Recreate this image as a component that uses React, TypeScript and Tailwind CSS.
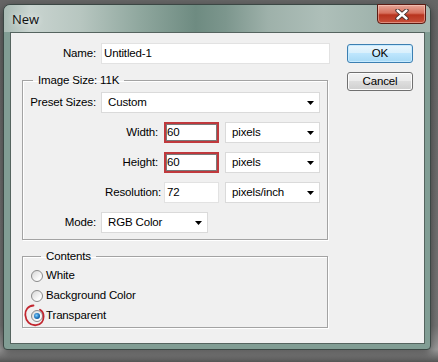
import React from "react";

const font = { fontFamily: '"Liberation Sans", Arial, sans-serif' };

function Arrow() {
  return (
    <svg width="7" height="4" viewBox="0 0 7 4" className="shrink-0">
      <path d="M0 0 H7 L3.5 4 Z" fill="#000" />
    </svg>
  );
}

function Select({ value, w }: { value: string; w: string }) {
  return (
    <div
      className={`${w} h-[21px] bg-white border border-[#dadada] flex items-center justify-between pl-[6px] pr-[5px] text-black`}
    >
      <span>{value}</span>
      <Arrow />
    </div>
  );
}

function Radio({ checked }: { checked?: boolean }) {
  return (
    <div className="w-[12px] h-[12px] rounded-full border border-[#8a8a8a] bg-[linear-gradient(135deg,#d6d6d6,#fbfbfb_70%)] flex items-center justify-center shrink-0">
      {checked && (
        <div className="w-[6px] h-[6px] rounded-full bg-[radial-gradient(circle_at_40%_40%,#7fd0ff,#1a6fb8_55%,#0b3e72)]" />
      )}
    </div>
  );
}

export default function App() {
  return (
    <div
      className="w-[438px] h-[362px] pt-[4px] pl-[3px] bg-[linear-gradient(to_bottom,#666666_0%,#747474_90%,#9a9a9a_96.5%,#555555_100%)] overflow-hidden"
      style={font}
    >
      <div className="w-[428px] h-[346px] rounded-t-[7px] rounded-b-[4px] border border-[#3b4744] bg-[#819d94] flex flex-col shadow-[0_3px_8px_rgba(0,0,0,0.45)]">
        {/* title bar */}
        <div className="h-[27px] rounded-t-[6px] flex items-start justify-between bg-[linear-gradient(to_right,#a9bbb4_0%,#c9d4d0_6%,#b7c6c0_18%,#8fa79e_32%,#6e8b81_45%,#7c968d_52%,#9eb1aa_62%,#aebfb9_75%,#9fb3ac_88%,#a6b8b1_100%)]">
          <span
            className="ml-[8px] mt-[7px] text-[13px] leading-[15px] text-[#101010] [text-shadow:0_0_6px_rgba(255,255,255,0.8)]"
            style={{ fontFamily: '"Open Sans", "Noto Sans", sans-serif' }}
          >
            New
          </span>
          <div className="mr-[4px] -mt-[1px] w-[49px] h-[20px] rounded-b-[4px] border border-[#5a1c14] bg-[linear-gradient(to_bottom,#e5a597_0%,#d7705c_45%,#b8341e_55%,#c8503a_100%)] flex items-center justify-center shadow-[inset_0_0_0_1px_rgba(255,220,210,0.45)]">
            <svg width="14" height="11" viewBox="0 0 14 11">
              <path d="M2.5 1.5 L11.5 9.5 M11.5 1.5 L2.5 9.5" stroke="#3a2a28" strokeWidth="4.2" strokeLinecap="round" />
              <path d="M2.5 1.5 L11.5 9.5 M11.5 1.5 L2.5 9.5" stroke="#ffffff" strokeWidth="2.4" strokeLinecap="round" />
            </svg>
          </div>
        </div>

        {/* client */}
        <div className="ml-[6px] mr-[5px] h-[312px] border border-[#55645f] bg-[#f0f0f0] flex pl-[11px] text-[11.5px] tracking-[-0.15px] text-black">
          <div className="w-[308px] flex flex-col">
            {/* Name row */}
            <div className="mt-[10px] flex items-center h-[21px]">
              <span className="w-[74px] text-right">Name:</span>
              <div className="ml-[5px] w-[229px] h-[21px] bg-white border border-[#e2e2e2] flex items-center pl-[2px]">
                Untitled-1
              </div>
            </div>

            {/* Image Size group */}
            <fieldset className="mt-[9px] w-[306px] border border-[#a3a3a3] shadow-[1px_1px_0_#fff,inset_1px_1px_0_#fff] pt-[5px] pb-[6px] flex flex-col gap-[9px]">
              <legend className="ml-[10px] px-[5px] leading-[14px]">Image Size: 11K</legend>
              <div className="flex items-center h-[21px]">
                <span className="w-[73px] text-right">Preset Sizes:</span>
                <div className="ml-[5px]">
                  <Select value="Custom" w="w-[219px]" />
                </div>
              </div>
              <div className="flex items-center h-[21px]">
                <span className="w-[135px] text-right">Width:</span>
                <div className="ml-[6px] w-[55px] h-[21px] bg-white border-2 border-[#c0393d] shadow-[inset_0_0_0_1px_#7a7a7a] flex items-center pl-[1px]">
                  60
                </div>
                <div className="ml-[6px]">
                  <Select value="pixels" w="w-[95px]" />
                </div>
              </div>
              <div className="flex items-center h-[21px]">
                <span className="w-[135px] text-right">Height:</span>
                <div className="ml-[6px] w-[55px] h-[21px] bg-white border-2 border-[#c0393d] shadow-[inset_0_0_0_1px_#7a7a7a] flex items-center pl-[1px]">
                  60
                </div>
                <div className="ml-[6px]">
                  <Select value="pixels" w="w-[95px]" />
                </div>
              </div>
              <div className="flex items-center h-[21px]">
                <span className="w-[138px] text-right">Resolution:</span>
                <div className="ml-[3px] w-[55px] h-[21px] bg-white border border-[#e2e2e2] flex items-center pl-[2px]">
                  72
                </div>
                <div className="ml-[6px]">
                  <Select value="pixels/inch" w="w-[95px]" />
                </div>
              </div>
              <div className="flex items-center h-[21px]">
                <span className="w-[73px] text-right">Mode:</span>
                <div className="ml-[5px]">
                  <Select value="RGB Color" w="w-[107px]" />
                </div>
              </div>
            </fieldset>

            {/* Contents group */}
            <fieldset className="mt-[9px] w-[306px] border border-[#a3a3a3] shadow-[1px_1px_0_#fff,inset_1px_1px_0_#fff] pt-[3px] pb-[1px] pl-[8px] flex flex-col">
              <legend className="ml-[10px] px-[5px] leading-[14px]">Contents</legend>
              <div className="h-[20px] flex items-center gap-[3px]">
                <Radio />
                <span>White</span>
              </div>
              <div className="h-[20px] flex items-center gap-[3px]">
                <Radio />
                <span>Background Color</span>
              </div>
              <div className="h-[20px] flex items-center gap-[3px]">
                <div className="relative">
                  <Radio checked />
                  <svg
                    className="absolute left-[-7px] top-[-6px] pointer-events-none"
                    width="24"
                    height="24"
                    viewBox="0 0 24 24"
                  >
                    <path
                      d="M9.5 1.5 C4 1.8 1 6 1.3 11 C1.8 17 6 21.7 12 21.2 C17 20.7 19.6 17 19.6 12.5 C19.6 9 18.2 7 16 5.8"
                      fill="none"
                      stroke="#c2262f"
                      strokeWidth="1.8"
                      strokeLinecap="round"
                    />
                  </svg>
                </div>
                <span>Transparent</span>
              </div>
            </fieldset>
          </div>

          {/* buttons */}
          <div className="ml-[17px] pt-[11px] flex flex-col gap-[9px]">
            <div className="w-[66px] h-[19px] rounded-[3px] border border-[#3c7fb1] bg-[linear-gradient(to_bottom,#eaf6fd_0%,#d9f0fc_45%,#bee6fd_50%,#a7d9f5_100%)] shadow-[inset_0_0_0_1px_#c6eaff] flex items-center justify-center">
              OK
            </div>
            <div className="w-[66px] h-[19px] rounded-[3px] border border-[#707070] bg-[linear-gradient(to_bottom,#f2f2f2_0%,#ebebeb_45%,#dddddd_50%,#cfcfcf_100%)] shadow-[inset_0_0_0_1px_#fcfcfc] flex items-center justify-center">
              Cancel
            </div>
          </div>
        </div>
      </div>
    </div>
  );
}
